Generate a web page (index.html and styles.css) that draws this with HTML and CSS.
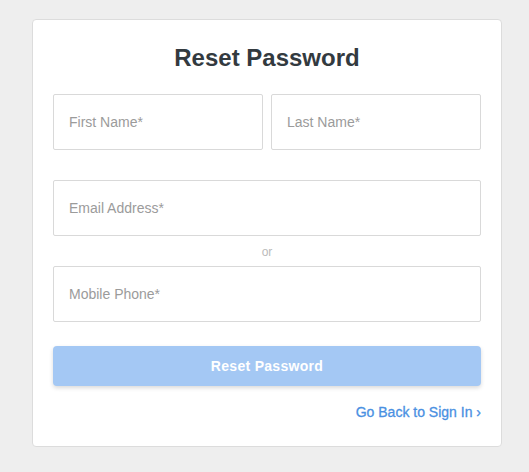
FILE: index.html
```html
<!DOCTYPE html>
<html lang="en">
<head>
    <meta charset="UTF-8">
    <meta name="viewport" content="width=device-width, initial-scale=1.0">
    <title>Reset Password</title>
    <link rel="stylesheet" href="styles.css">
</head>
<body>
    <div class="card">
        <h1>Reset Password</h1>
        <div class="row">
            <input type="text" class="field" placeholder="First Name*">
            <input type="text" class="field" placeholder="Last Name*">
        </div>
        <input type="email" class="field email" placeholder="Email Address*">
        <div class="or">or</div>
        <input type="tel" class="field" placeholder="Mobile Phone*">
        <button class="button">Reset Password</button>
        <div class="back">
            <a href="#">Go Back to Sign In &rsaquo;</a>
        </div>
    </div>
</body>
</html>
```

FILE: styles.css
```css
body {
    font-family: "Liberation Sans", Arial, sans-serif;
    background: #eeeeee;
    margin: 0;
    padding: 19px 0 0 32px;
}
.card {
    width: 470px;
    box-sizing: border-box;
    background: #fff;
    border: 1px solid #dcdcdc;
    border-radius: 4px;
    padding: 24px 20px 24px;
}
.card h1 {
    margin: 0 0 22px;
    text-align: center;
    font-size: 24px;
    font-weight: bold;
    color: #333a3f;
}
.row {
    display: flex;
    gap: 8px;
    margin-bottom: 30px;
}
.field {
    display: block;
    width: 100%;
    height: 56px;
    box-sizing: border-box;
    border: 1px solid #d9d9d9;
    border-radius: 2px;
    padding: 0 15px;
    font-family: inherit;
    font-size: 14px;
    color: #333;
    outline: none;
    margin: 0;
}
.field::placeholder {
    color: #9b9b9b;
}
.or {
    height: 30px;
    line-height: 33px;
    text-align: center;
    font-size: 12px;
    color: #bbbbbb;
}
.button {
    display: block;
    width: 100%;
    height: 40px;
    margin-top: 24px;
    background: #a4c8f4;
    color: #fff;
    border: none;
    border-radius: 4px;
    box-shadow: 0 2px 4px rgba(0, 0, 0, 0.15);
    font-family: inherit;
    font-size: 14px;
    font-weight: bold;
    letter-spacing: 0.3px;
    cursor: pointer;
}
.back {
    margin-top: 16px;
    text-align: right;
    line-height: 20px;
    font-size: 14px;
}
.back a {
    color: #4a90e2;
    text-decoration: none;
    -webkit-text-stroke: 0.3px #4a90e2;
}
```
